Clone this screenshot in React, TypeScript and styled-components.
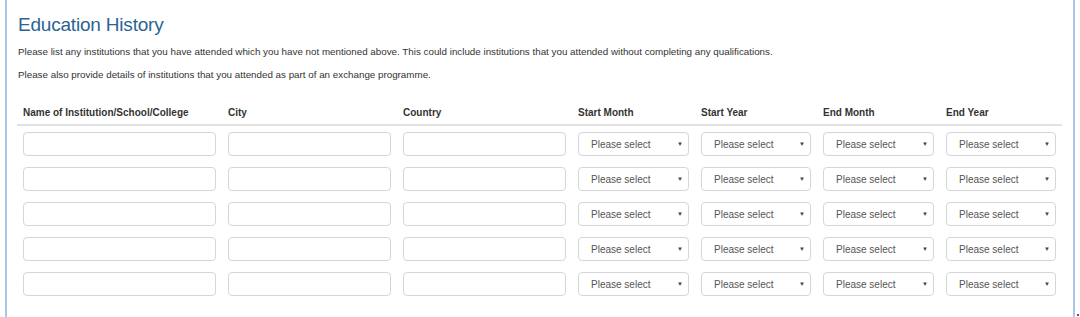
import styled, { createGlobalStyle } from 'styled-components';

const GlobalStyle = createGlobalStyle`
  html, body {
    margin: 0;
    padding: 0;
    background: #fff;
  }

  body {
    font-family: 'Liberation Sans', Arial, sans-serif;
    color: #333;
  }
`;

const columns = [
  { label: 'Name of Institution/School/College', width: 205, select: false },
  { label: 'City', width: 175, select: false },
  { label: 'Country', width: 175, select: false },
  { label: 'Start Month', width: 123, select: true },
  { label: 'Start Year', width: 122, select: true },
  { label: 'End Month', width: 123, select: true },
  { label: 'End Year', width: 122, select: true },
];

const rows = [0, 1, 2, 3, 4];

const App = () => {
  return (
    <>
      <GlobalStyle />
      <Panel>
        <Heading>Education History</Heading>
        <Intro>
          Please list any institutions that you have attended which you have not mentioned above. This
          could include institutions that you attended without completing any qualifications.
        </Intro>
        <Intro>
          Please also provide details of institutions that you attended as part of an exchange programme.
        </Intro>
        <Table $cols={columns.map((c) => `${c.width}px`).join(' ')}>
          {columns.map((col) => (
            <HeadCell key={col.label}>{col.label}</HeadCell>
          ))}
          {rows.map((row) =>
            columns.map((col) => (
              <Cell key={`${row}-${col.label}`}>
                {col.select ? (
                  <SelectWrap>
                    <Select defaultValue="">
                      <option value="">Please select</option>
                    </Select>
                    <Caret>▼</Caret>
                  </SelectWrap>
                ) : (
                  <TextInput type="text" />
                )}
              </Cell>
            ))
          )}
        </Table>
      </Panel>
      <CornerMark />
    </>
  );
};

export default App;

const Panel = styled.div`
  box-sizing: border-box;
  margin-left: 5px;
  width: 1070px;
  height: 317px;
  border-left: 2px solid #a9c6e8;
  border-right: 2px solid #a9c6e8;
  padding: 13px 0 0 11px;
  overflow: hidden;
`;

const Heading = styled.h2`
  margin: 0 0 9px;
  font-size: 19px;
  font-weight: 400;
  line-height: 24px;
  color: #2d6393;
  letter-spacing: -0.2px;
`;

const Intro = styled.p`
  margin: 0 0 11px;
  font-size: 9.8px;
  line-height: 12px;
  color: #333;
`;

const Table = styled.div<{ $cols: string }>`
  display: grid;
  grid-template-columns: ${(p) => p.$cols};
  margin: 26px 0 0 -1px;
`;

const HeadCell = styled.div`
  padding: 0 6px 5px;
  font-size: 10px;
  font-weight: 700;
  line-height: 12px;
  color: #333;
  border-bottom: 2px solid #e2e2e2;
`;

const Cell = styled.div`
  padding: 6px 6px 5px;
`;

const fieldBase = `
  box-sizing: border-box;
  display: block;
  width: 100%;
  height: 24px;
  margin: 0;
  border: 1px solid #d6d6d6;
  border-radius: 4px;
  background: #fff;
  font-family: 'Liberation Sans', Arial, sans-serif;
  font-size: 10px;
  color: #555;
  outline: none;
`;

const TextInput = styled.input`
  ${fieldBase}
  padding: 0 8px;
`;

const SelectWrap = styled.div`
  position: relative;
`;

const Select = styled.select`
  ${fieldBase}
  appearance: none;
  -webkit-appearance: none;
  padding: 0 20px 0 12px;
`;

const Caret = styled.span`
  position: absolute;
  right: 6px;
  top: 8px;
  font-size: 6px;
  line-height: 8px;
  color: #444;
  pointer-events: none;
`;

const CornerMark = styled.div`
  position: absolute;
  left: 1077px;
  top: 314px;
  width: 2px;
  height: 2px;
  background: #b0312b;
`;
